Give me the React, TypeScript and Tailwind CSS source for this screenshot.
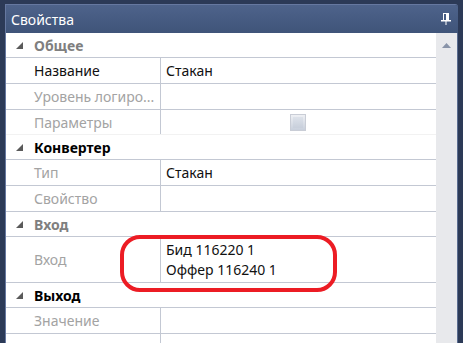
import React from "react";

type Item = { name: string; value?: string; lines?: string[]; dim?: boolean; check?: boolean; h?: string };
type Group = { title: string; dim?: boolean; items: Item[] };

const groups: Group[] = [
  {
    title: "Общее",
    dim: true,
    items: [
      { name: "Название", value: "Стакан" },
      { name: "Уровень логиро...", dim: true },
      { name: "Параметры", dim: true, check: true, h: "h-[25px]" },
    ],
  },
  {
    title: "Конвертер",
    items: [
      { name: "Тип", value: "Стакан", dim: true },
      { name: "Свойство", dim: true },
    ],
  },
  {
    title: "Вход",
    dim: true,
    items: [{ name: "Вход", dim: true, lines: ["Бид 116220 1", "Оффер 116240 1"], h: "h-[46px]" }],
  },
  {
    title: "Выход",
    items: [
      { name: "Значение", dim: true },
      { name: "" },
    ],
  },
];

function Expander() {
  return (
    <svg width="7" height="7" viewBox="0 0 7 7" className="shrink-0">
      <polygon points="7,0 7,7 0,7" fill="#5a5a5a" />
    </svg>
  );
}

function PinIcon() {
  return (
    <svg width="10" height="12" viewBox="0 0 10 12">
      <rect x="2.5" y="0.5" width="5" height="7" fill="none" stroke="#ffffff" strokeWidth="1" />
      <rect x="5" y="1" width="2" height="6" fill="#ffffff" />
      <rect x="0" y="7" width="10" height="1.5" fill="#ffffff" />
      <rect x="4.5" y="8" width="1" height="4" fill="#ffffff" />
    </svg>
  );
}

function Row({ item }: { item: Item }) {
  return (
    <div className={`flex ${item.h ?? "h-[26px]"} ${item.check ? "border-b border-[#f2f2f2]" : "border-b border-[#c3c8d3]"}`}>
      <div
        className={`w-[155px] shrink-0 pl-[28px] pr-[2px] flex items-center border-r border-[#c3c8d3] whitespace-nowrap ${
          item.dim ? "text-[#a3a3a3]" : "text-[#111111]"
        }`}
      >
        <span>{item.name}</span>
      </div>
      <div className="flex-1 flex flex-col justify-center pl-[5px] text-[#111111]">
        {item.value && <span>{item.value}</span>}
        {item.lines && item.lines.map((l) => (
          <span key={l} className="leading-[20px]">{l}</span>
        ))}
        {item.check && (
          <div className="ml-[124px] w-[16px] h-[17px] border border-[#c9cdd6] bg-gradient-to-b from-[#eef0f4] to-[#c9d0dc] p-[2px]">
            <div className="w-full h-full bg-gradient-to-b from-[#dde2ea] to-[#c8cfdb]" />
          </div>
        )}
      </div>
    </div>
  );
}

export default function App() {
  return (
    <div
      className="relative w-[463px] h-[343px] overflow-hidden bg-[#2c3a57] pt-[4px] pl-[5px] pr-[5px] text-[14px]"
      style={{ fontFamily: '"Noto Sans", "Open Sans", sans-serif' }}
    >
      <div className="flex flex-col h-full border-l border-t border-[#6678a0] rounded-tr-[3px] overflow-hidden">
        <div className="h-[28px] shrink-0 flex items-center justify-between pl-[5px] pr-[7px] bg-gradient-to-b from-[#4e638b] to-[#3f5479] text-white">
          <span className="text-[14px]">Свойства</span>
          <PinIcon />
        </div>
        <div className="flex flex-1 min-h-0">
          <div className="w-[431px] bg-white flex flex-col">
            {groups.map((g) => (
              <div key={g.title}>
                <div className="h-[25px] flex items-center border-b border-[#c3c8d3] pl-[10px] gap-[11px]">
                  <Expander />
                  <span className={`font-bold ${g.dim ? "text-[#7f7f7f]" : "text-black"}`}>{g.title}</span>
                </div>
                {g.items.map((it, i) => (
                  <Row key={g.title + i} item={it} />
                ))}
              </div>
            ))}
          </div>
          <div className="w-[21px] bg-[#e8e9ec] flex justify-center pt-[10px]">
            <svg width="9" height="5" viewBox="0 0 9 5">
              <polygon points="4.5,0 9,5 0,5" fill="#8893a8" />
            </svg>
          </div>
          <div className="w-[1px] bg-[#5a6c90]" />
        </div>
      </div>
      <div className="absolute left-[120px] top-[235px] w-[217px] h-[57px] border-[4px] border-[#ec1c24] rounded-[20px]" />
    </div>
  );
}
